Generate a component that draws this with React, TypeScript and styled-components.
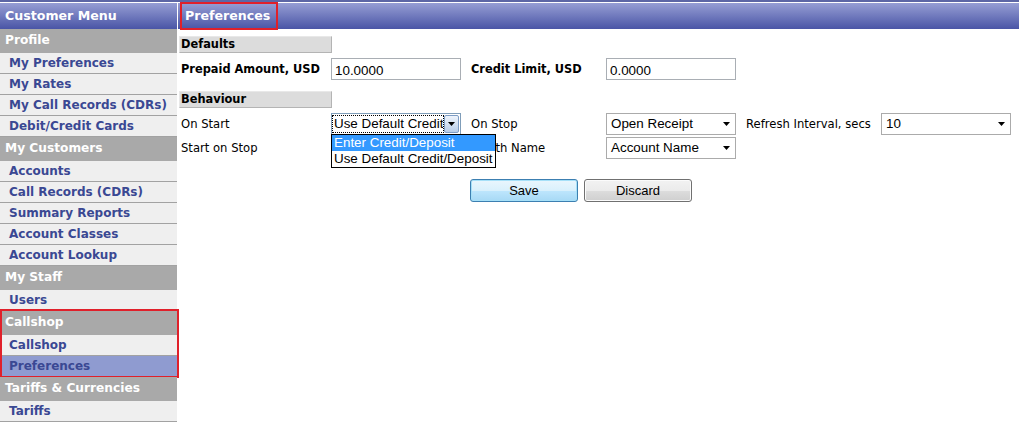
import React from "react";
import styled, { createGlobalStyle } from "styled-components";

const GlobalStyle = createGlobalStyle`
  html, body {
    margin: 0;
    padding: 0;
    background: #ffffff;
  }
  body {
    font-family: "DejaVu Sans", Verdana, sans-serif;
  }
`;

const menu = [
  { title: "Profile", items: ["My Preferences", "My Rates", "My Call Records (CDRs)", "Debit/Credit Cards"] },
  {
    title: "My Customers",
    items: ["Accounts", "Call Records (CDRs)", "Summary Reports", "Account Classes", "Account Lookup"],
  },
  { title: "My Staff", items: ["Users"] },
  { title: "Callshop", items: ["Callshop", "Preferences"], marked: true },
  { title: "Tariffs & Currencies", items: ["Tariffs"] },
];

const Page = styled.div`
  display: flex;
  height: 424px;
  overflow: hidden;
  border-top: 2px solid #5d67a5;
  padding-top: 1px;
  box-sizing: border-box;
`;

const Sidebar = styled.nav`
  width: 177px;
  flex-shrink: 0;
  margin-right: 1px;
  display: flex;
  flex-direction: column;
`;

const BarTitle = styled.div`
  height: 26px;
  line-height: 26px;
  background: linear-gradient(#969ed4, #4a55a6);
  color: #ffffff;
  font-weight: bold;
  font-size: 12.6px;
  padding-left: 5px;
  white-space: nowrap;
`;

const Group = styled.div<{ $marked?: boolean }>`
  position: relative;
  &::after {
    content: "";
    display: ${(p) => (p.$marked ? "block" : "none")};
    position: absolute;
    top: -2px;
    left: 0;
    right: -2px;
    bottom: -1px;
    border: 2px solid #e0202a;
    pointer-events: none;
  }
`;

const GroupHeader = styled.div`
  height: 24px;
  line-height: 23px;
  background: #a9a9a9;
  color: #ffffff;
  font-weight: bold;
  font-size: 12.2px;
  padding-left: 5px;
  white-space: nowrap;
`;

const MenuItem = styled.a<{ $active?: boolean }>`
  display: block;
  height: 20px;
  line-height: 20px;
  border-bottom: 1px solid #a2a2a2;
  background: ${(p) => (p.$active ? "#8f9bd0" : "#efefef")};
  color: #3a4893;
  font-weight: bold;
  font-size: 12px;
  padding-left: 9px;
  text-decoration: none;
  white-space: nowrap;
`;

const Main = styled.main`
  flex: 1;
  display: flex;
  flex-direction: column;
  min-width: 0;
`;

const PageTitle = styled.span`
  position: relative;
  display: inline-block;
  height: 26px;
  padding-left: 2px;
  &::after {
    content: "";
    position: absolute;
    top: -1px;
    left: -3px;
    right: -8px;
    bottom: -1px;
    border: 2px solid #e0202a;
  }
`;

const Content = styled.div`
  padding: 7px 0 0 1px;
  display: flex;
  flex-direction: column;
`;

const SectionBar = styled.div`
  width: 150px;
  height: 15px;
  line-height: 15px;
  background: #dcdcdc;
  border: 1px solid #b4b4b4;
  border-top-color: #e8e8e8;
  border-left-color: #e8e8e8;
  font-weight: bold;
  font-size: 11.4px;
  color: #000000;
  padding-left: 1px;
`;

const FormGrid = styled.div<{ $top: number; $bottom: number }>`
  display: grid;
  grid-template-columns: 150px 130px 145px 130px 145px 130px;
  row-gap: 2px;
  align-items: center;
  padding: ${(p) => p.$top}px 0 ${(p) => p.$bottom}px 2px;
`;

const Label = styled.div<{ $bold?: boolean; $pad?: boolean }>`
  font-size: ${(p) => (p.$bold ? "11.4px" : "11.6px")};
  font-weight: ${(p) => (p.$bold ? "bold" : "normal")};
  color: #000000;
  padding-left: ${(p) => (p.$pad ? "10px" : "0")};
  white-space: nowrap;
`;

const TextInput = styled.input`
  box-sizing: border-box;
  width: 130px;
  height: 22px;
  border: 1px solid #a9aeb4;
  font-family: "Liberation Sans", Arial, sans-serif;
  font-size: 13.4px;
  padding: 2px 3px 0;
  color: #000000;
  outline: none;
`;

const SelectBox = styled.div<{ $classic?: boolean }>`
  position: relative;
  box-sizing: border-box;
  width: 130px;
  height: 22px;
  border: 1px solid ${(p) => (p.$classic ? "#7f9db9" : "#ababab")};
  background: #ffffff;
  display: flex;
  align-items: center;
  font-family: "Liberation Sans", Arial, sans-serif;
  font-size: 13.4px;
  color: #000000;
`;

const SelectText = styled.span<{ $focus?: boolean }>`
  flex: 1;
  min-width: 0;
  overflow: hidden;
  white-space: nowrap;
  padding-left: ${(p) => (p.$focus ? "1px" : "3px")};
  margin: 1px ${(p) => (p.$focus ? "0" : "1px")} 1px 1px;
  line-height: 16px;
  outline: ${(p) => (p.$focus ? "1px dotted #000000" : "none")};
`;

const Arrow = styled.span`
  width: 18px;
  display: flex;
  justify-content: center;
  align-items: center;
`;

const XpButton = styled.span`
  width: 15px;
  height: 18px;
  margin: 0 1px 0 1px;
  box-sizing: border-box;
  border: 1px solid #7d9cc4;
  border-radius: 2px;
  background: linear-gradient(#eef4fc, #b8cde8);
  display: flex;
  justify-content: center;
  align-items: center;
`;

const DropList = styled.ul`
  position: absolute;
  top: 20px;
  left: -1px;
  width: 165px;
  box-sizing: border-box;
  margin: 0;
  padding: 0;
  list-style: none;
  border: 1px solid #000000;
  background: #ffffff;
  z-index: 5;
`;

const DropOption = styled.li<{ $hot?: boolean }>`
  height: 16px;
  line-height: 16px;
  padding-left: 2px;
  white-space: nowrap;
  background: ${(p) => (p.$hot ? "#3399ff" : "#ffffff")};
  color: ${(p) => (p.$hot ? "#ffffff" : "#000000")};
`;

const Actions = styled.div`
  display: flex;
  gap: 6px;
  padding: 20px 0 0 291px;
`;

const Button = styled.button<{ $default?: boolean }>`
  width: 108px;
  height: 23px;
  box-sizing: border-box;
  border: 1px solid ${(p) => (p.$default ? "#3c7fb1" : "#707070")};
  border-radius: 3px;
  background: ${(p) =>
    p.$default
      ? "linear-gradient(#eaf6fd 0%, #d9f0fc 50%, #bee6fd 51%, #a7d9f5 100%)"
      : "linear-gradient(#f2f2f2 0%, #ebebeb 50%, #dddddd 51%, #cfcfcf 100%)"};
  box-shadow: inset 0 0 0 1px ${(p) => (p.$default ? "#a6e0f8" : "#fbfbfb")};
  font-family: "Liberation Sans", Arial, sans-serif;
  font-size: 13px;
  color: #000000;
  padding: 0;
`;

const ArrowIcon = () => (
  <svg width="7" height="4" viewBox="0 0 7 4">
    <path d="M0 0h7L3.5 4z" fill="#000" />
  </svg>
);

type SelectProps = { value: string; classic?: boolean; open?: string[] };

const Select = ({ value, classic, open }: SelectProps) => (
  <SelectBox $classic={classic}>
    <SelectText $focus={classic}>{value}</SelectText>
    {classic ? (
      <XpButton>
        <ArrowIcon />
      </XpButton>
    ) : (
      <Arrow>
        <ArrowIcon />
      </Arrow>
    )}
    {open && (
      <DropList>
        {open.map((o, i) => (
          <DropOption key={o} $hot={i === 0}>
            {o}
          </DropOption>
        ))}
      </DropList>
    )}
  </SelectBox>
);

export default function App() {
  return (
    <>
      <GlobalStyle />
      <Page>
        <Sidebar>
          <BarTitle>Customer Menu</BarTitle>
          {menu.map((g) => (
            <Group key={g.title} $marked={g.marked}>
              <GroupHeader>{g.title}</GroupHeader>
              {g.items.map((it) => (
                <MenuItem key={it} href="#" $active={g.marked && it === "Preferences"}>
                  {it}
                </MenuItem>
              ))}
            </Group>
          ))}
        </Sidebar>
        <Main>
          <BarTitle>
            <PageTitle>Preferences</PageTitle>
          </BarTitle>
          <Content>
            <SectionBar>Defaults</SectionBar>
            <FormGrid $top={5} $bottom={11}>
              <Label $bold>Prepaid Amount, USD</Label>
              <TextInput readOnly value="10.0000" />
              <Label $bold $pad>
                Credit Limit, USD
              </Label>
              <TextInput readOnly value="0.0000" />
            </FormGrid>
            <SectionBar>Behaviour</SectionBar>
            <FormGrid $top={5} $bottom={0}>
              <Label>On Start</Label>
              <Select
                value="Use Default Credit/Deposit"
                classic
                open={["Enter Credit/Deposit", "Use Default Credit/Deposit"]}
              />
              <Label $pad>On Stop</Label>
              <Select value="Open Receipt" />
              <Label $pad>Refresh Interval, secs</Label>
              <Select value="10" />
              <Label>Start on Stop</Label>
              <Select value="Enter Credit/Deposit" />
              <Label $pad>Month Name</Label>
              <Select value="Account Name" />
            </FormGrid>
            <Actions>
              <Button $default>Save</Button>
              <Button>Discard</Button>
            </Actions>
          </Content>
        </Main>
      </Page>
    </>
  );
}
